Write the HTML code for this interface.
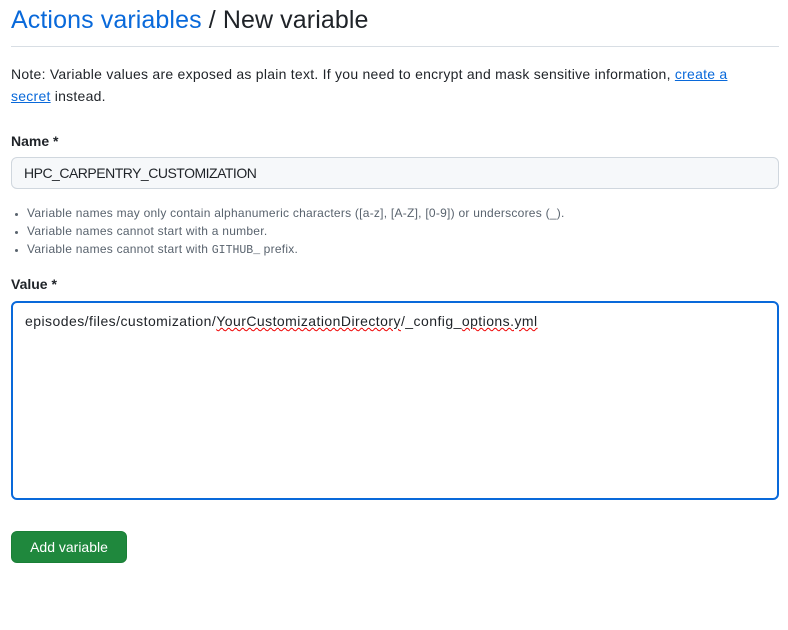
<!DOCTYPE html>
<html><head><style>
body{margin:0;background:#fff;font-family:"Liberation Sans",sans-serif;color:#1f2328;width:788px;height:630px;position:relative;overflow:hidden}
.a{position:absolute}
h1{position:absolute;left:11px;top:3px;margin:0;font-weight:400;font-size:25px;line-height:34px;letter-spacing:0.1px}
h1 span{color:#0969da}
.hr{left:11px;top:46px;width:768px;height:1px;background:#d8dee4}
.note{left:11px;top:63px;width:735px;font-size:14px;line-height:22px;letter-spacing:0.25px}
.note a{color:#0969da;text-decoration:underline}
.lbl{font-weight:700;font-size:14px;left:11px}
.inp{left:11px;top:157px;border:1px solid #d0d7de;border-radius:6px;background:#f6f8fa;font-size:14px;line-height:30px;padding-left:12px;box-sizing:border-box;width:768px;height:32px;letter-spacing:-0.5px}
ul{position:absolute;left:11px;top:204px;margin:0;padding-left:16px;font-size:12px;line-height:18px;color:#59636e;letter-spacing:0.25px}
ul li::marker{font-size:10px}
code{font-family:"Liberation Mono",monospace;font-size:11.5px;letter-spacing:0}
.ta{left:11px;top:301px;width:768px;height:199px;box-sizing:border-box;border:2px solid #0969da;border-radius:6px;font-size:14px;padding:10px 12px;letter-spacing:0.45px}
.sq{text-decoration:underline wavy #e00;text-decoration-thickness:1px}
.btn{left:11px;top:531px;width:116px;height:32px;box-sizing:border-box;background:#1f883d;border:1px solid #1a7f37;border-radius:6px;color:#fff;font-size:14px;line-height:30px;text-align:center;font-weight:500}
</style></head><body>
<h1><span>Actions variables</span> / New variable</h1>
<div class="a hr"></div>
<div class="a note">Note: Variable values are exposed as plain text. If you need to encrypt and mask sensitive information, <a>create a secret</a> instead.</div>
<div class="a lbl" style="top:133px">Name *</div>
<div class="a inp">HPC_CARPENTRY_CUSTOMIZATION</div>
<ul>
<li>Variable names may only contain alphanumeric characters ([a-z], [A-Z], [0-9]) or underscores (_).</li>
<li>Variable names cannot start with a number.</li>
<li>Variable names cannot start with <code>GITHUB_</code> prefix.</li>
</ul>
<div class="a lbl" style="top:276px">Value *</div>
<div class="a ta">episodes/files/customization/<span class="sq">YourCustomizationDirectory</span>/_config_<span class="sq">options.yml</span></div>
<div class="a btn">Add variable</div>
</body></html>
